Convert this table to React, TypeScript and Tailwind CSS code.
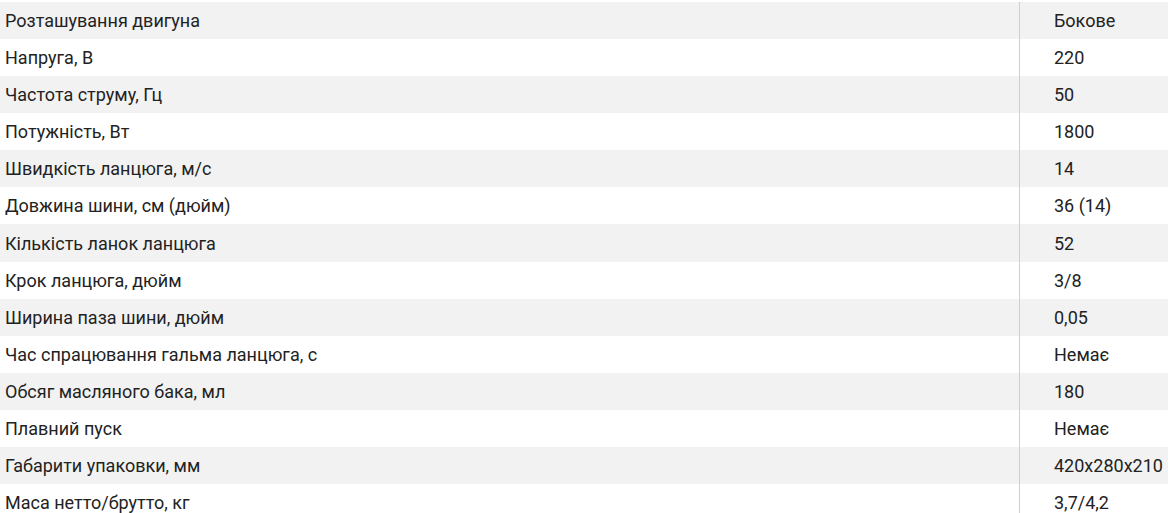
const specs: [string, string][] = [
  ['Розташування двигуна', 'Бокове'],
  ['Напруга, В', '220'],
  ['Частота струму, Гц', '50'],
  ['Потужність, Вт', '1800'],
  ['Швидкість ланцюга, м/с', '14'],
  ['Довжина шини, см (дюйм)', '36 (14)'],
  ['Кількість ланок ланцюга', '52'],
  ['Крок ланцюга, дюйм', '3/8'],
  ['Ширина паза шини, дюйм', '0,05'],
  ['Час спрацювання гальма ланцюга, с', 'Немає'],
  ['Обсяг масляного бака, мл', '180'],
  ['Плавний пуск', 'Немає'],
  ['Габарити упаковки, мм', '420x280x210'],
  ['Маса нетто/брутто, кг', '3,7/4,2'],
];

export default function App() {
  return (
    <div className="w-[1168px] h-[513px] overflow-hidden bg-white pt-[2px] font-['Roboto',sans-serif] text-[18px] text-[#222]">
      {specs.map(([name, value], i) => (
        <div
          key={name}
          className={`grid grid-cols-[1019px_1fr] h-[37.08px] ${i % 2 === 0 ? 'bg-[#f2f2f2]' : 'bg-white'}`}
        >
          <div className="flex items-center pl-[5px]">{name}</div>
          <div className="flex items-center pl-[34px] border-l border-[#cfcfcf]">{value}</div>
        </div>
      ))}
    </div>
  );
}
